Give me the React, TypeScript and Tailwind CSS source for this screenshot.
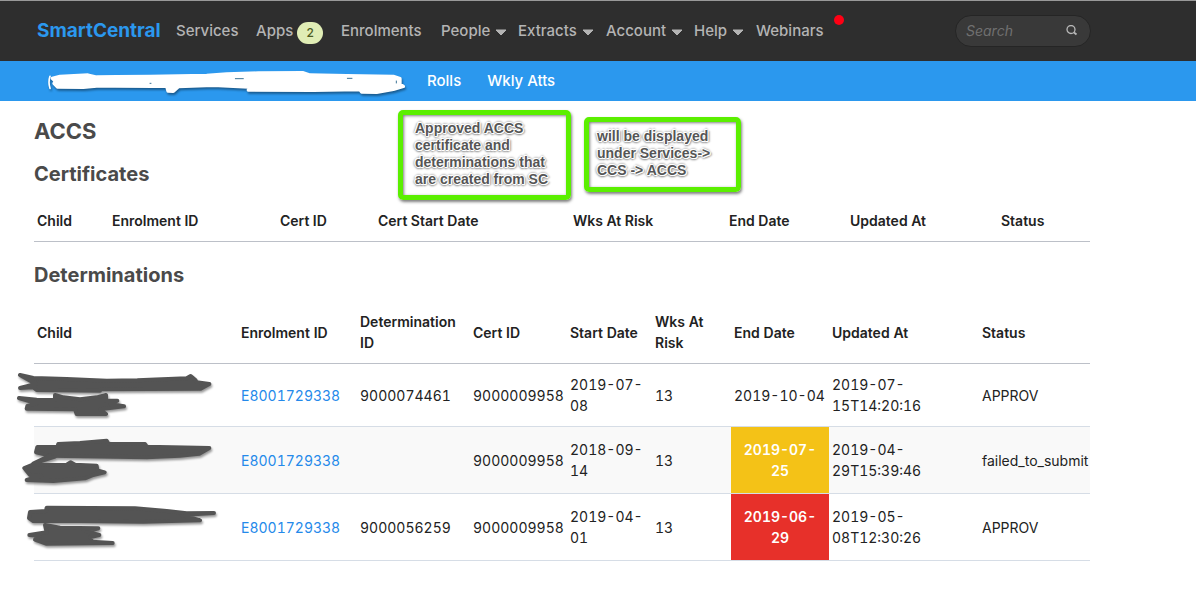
import React from 'react';

interface Determination {
  enrolmentId: string;
  determinationId: string;
  certId: string;
  startDate: string;
  weeks: number;
  endDate: string;
  endClass?: string;
  updatedAt: string;
  status: string;
  viewBox: string;
  marks: string[];
}

const certificateColumns = [
  { label: 'Child', width: 'w-[75px]' },
  { label: 'Enrolment ID', width: 'w-[168px]' },
  { label: 'Cert ID', width: 'w-[98px]' },
  { label: 'Cert Start Date', width: 'w-[195px]' },
  { label: 'Wks At Risk', width: 'w-[156px]' },
  { label: 'End Date', width: 'w-[121px]' },
  { label: 'Updated At', width: 'w-[151px]' },
  { label: 'Status', width: '' },
];

const determinationColumns = [
  { label: 'Child', width: 'w-[204px]' },
  { label: 'Enrolment ID', width: 'w-[119px]' },
  { label: 'Determination ID', width: 'w-[113px]' },
  { label: 'Cert ID', width: 'w-[97px]' },
  { label: 'Start Date', width: 'w-[85px]' },
  { label: 'Wks At Risk', width: 'w-[79px]' },
  { label: 'End Date', width: 'w-[98px]' },
  { label: 'Updated At', width: 'w-[150px]' },
  { label: 'Status', width: '' },
];

const determinations: Determination[] = [
  {
    enrolmentId: 'E8001729338',
    determinationId: '9000074461',
    certId: '9000009958',
    startDate: '2019-07-08',
    weeks: 13,
    endDate: '2019-10-04',
    updatedAt: '2019-07-15T14:20:16',
    status: 'APPROV',
    viewBox: '42 192 630 186',
    marks: [
      'M60 225 L100 234 L200 237 L320 242 L412 241 L560 235 L572 228 L586 240 L590 247 L628 252 L602 266 L300 268 L300 272 L110 270 L100 262 L60 264 L108 252 Z',
      'M57 294 L110 299 L165 300 L165 285 L190 292 L240 298 L290 292 L318 285 L318 302 L352 302 L330 312 L372 319 L300 328 L318 342 L230 342 L225 328 L80 326 L82 318 L110 310 Z',
    ],
  },
  {
    enrolmentId: 'E8001729338',
    determinationId: '',
    certId: '9000009958',
    startDate: '2018-09-14',
    weeks: 13,
    endDate: '2019-07-25',
    endClass: 'bg-[#f4c217]',
    updatedAt: '2019-04-29T15:39:46',
    status: 'failed_to_submit',
    viewBox: '42 6 630 186',
    marks: [
      'M112 66 L172 66 L175 57 L240 54 L320 47 L325 56 L435 57 L440 65 L628 69 L598 86 L540 92 L440 97 L150 92 L108 82 Z',
      'M150 92 L100 116 L165 95',
      'M73 129 L95 120 L200 119 L212 112 L225 119 L290 122 L292 136 L314 142 L280 150 L255 160 L160 168 L80 165 L125 152 L90 150 Z',
    ],
  },
  {
    enrolmentId: 'E8001729338',
    determinationId: '9000056259',
    certId: '9000009958',
    startDate: '2019-04-01',
    weeks: 13,
    endDate: '2019-06-29',
    endClass: 'bg-[#e7302a]',
    updatedAt: '2019-05-08T12:30:26',
    status: 'APPROV',
    viewBox: '42 207 630 186',
    marks: [
      'M90 261 L138 258 L140 248 L405 250 L500 258 L560 265 L642 264 L545 270 L600 286 L430 290 L240 288 L100 288 L87 279 Z',
      'M135 300 L180 308 L295 310 L260 320 L298 330 L272 336 L275 350 L338 354 L138 356 L105 344 L120 332 L88 330 L140 322 Z',
    ],
  },
];

const Caret = () => (
  <svg className="mt-1 ml-1 h-2 w-[14px]" viewBox="0 0 14 8" aria-hidden="true">
    <path d="M2 1 H12 L7 6 Z" fill="currentColor" stroke="currentColor" strokeLinejoin="round" />
  </svg>
);

const NavLink: React.FC<{ label: string; caret?: boolean; children?: React.ReactNode }> = ({
  label,
  caret,
  children,
}) => (
  <a href="#" className="relative flex items-center whitespace-nowrap">
    {label}
    {caret && <Caret />}
    {children}
  </a>
);

const Header = () => (
  <header>
    <div className="flex h-[61px] items-center border-t border-[#999] bg-[#2e2e2e] pl-[37px] pr-[105px] text-[#b4b4b4]">
      <nav className="grid grid-cols-[139px_80px_85px_100px_77px_88px_88px_62px_auto] items-center text-[15px] font-medium">
        <a href="#" className="text-[19px] font-bold text-[#2b98ee]">
          SmartCentral
        </a>
        <NavLink label="Services" />
        <NavLink label="Apps">
          <span className="mt-[3px] ml-1 flex h-[22px] w-[26px] items-center justify-center rounded-full bg-[#e0edb5] text-xs text-[#4c5b22]">
            2
          </span>
        </NavLink>
        <NavLink label="Enrolments" />
        <NavLink label="People" caret />
        <NavLink label="Extracts" caret />
        <NavLink label="Account" caret />
        <NavLink label="Help" caret />
        <NavLink label="Webinars">
          <span className="absolute -right-5 -top-[5px] h-[10px] w-[10px] rounded-full bg-[#ff0014]" />
        </NavLink>
      </nav>
      <form className="ml-auto flex h-8 w-[136px] items-center rounded-full border border-[#252525] bg-[#393939] pl-[10px] pr-3">
        <input
          type="text"
          aria-label="Search"
          placeholder="Search"
          className="min-w-0 flex-1 bg-transparent text-sm italic outline-none placeholder:text-[#707070]"
        />
        <button type="button" aria-label="Submit search">
          <svg className="h-3 w-3" viewBox="0 0 12 12" fill="none" stroke="#b8b8b8" aria-hidden="true">
            <circle cx="5" cy="4.5" r="4" strokeWidth="1.3" />
            <path d="M8 7.5 L10.5 9.5" strokeWidth="1.9" />
          </svg>
        </button>
      </form>
    </div>
    <nav className="flex h-10 items-center bg-[#2b98ee] pl-11 text-[15px] font-medium text-white">
      <svg
        className="mr-[18px] h-10 w-[365px] drop-shadow-[1px_2px_1px_rgba(0,0,0,0.4)]"
        viewBox="132 183 1095 120"
        fill="#fff"
        stroke="#fff"
        strokeLinecap="round"
        strokeLinejoin="round"
        aria-hidden="true"
      >
        <path d="M150 229 Q144 246 150 265" fill="none" strokeWidth="5" />
        <path
          strokeWidth="10"
          d="M157 235 L166 244 L162 250 L172 261 L250 262 L290 258 L345 258 L460 259 L500 258 L504 273 L520 274 L535 260 L640 256 L775 263 L745 270 L940 271 L1080 269 L1085 276 L1130 277 L1180 268 L1210 259 L1200 252 L1200 236 L1180 229 L1040 227 L930 225 L908 218 L775 219 L680 222 L620 226 L450 229 L350 230 L290 231 L264 225 L180 229 Z"
        />
        <path d="M706 236 H730 M1042 235 H1056 M1189 243 V249 M450 250 H453" stroke="#3c7395" strokeWidth="3" />
      </svg>
      <a href="#" className="mr-[26px]">
        Rolls
      </a>
      <a href="#">Wkly Atts</a>
    </nav>
  </header>
);

const TableHead: React.FC<{ columns: { label: string; width: string }[] }> = ({ columns }) => (
  <thead>
    <tr className="border-b border-[#bcc0c8]">
      {columns.map((column) => (
        <th key={column.label} scope="col" className={`px-[3px] py-[10px] font-semibold ${column.width}`}>
          {column.label}
        </th>
      ))}
    </tr>
  </thead>
);

const noteClass =
  'absolute rounded-[5px] border-[5px] border-[#5bef00] font-["Liberation_Sans",sans-serif] text-sm leading-[17px] font-bold text-[#555] shadow-[1px_2px_3px_rgba(0,0,0,0.5),inset_1px_1px_3px_rgba(0,0,0,0.5)] [text-shadow:1px_0_#fff,-1px_0_#fff,0_1px_#fff,0_-1px_#fff,1px_1px_#fff,-1px_-1px_#fff,2px_1px_2px_#888,-2px_0_2px_#aaa,0_2px_2px_#888,0_-2px_2px_#bbb]';

export default function App() {
  return (
    <div className='relative min-h-screen bg-white font-["Inter",sans-serif] text-[#222]'>
      <Header />
      <main className="ml-[34px] mr-[106px] pt-[15px]">
        <h1 className="text-[22px] leading-[30px] font-bold text-[#4a4a4a]">ACCS</h1>
        <h2 className="mt-[13px] mb-[11px] text-xl leading-[30px] font-bold text-[#4a4a4a]">Certificates</h2>
        <table className="w-full table-fixed text-left text-sm leading-[21px]">
          <TableHead columns={certificateColumns} />
        </table>

        <h2 className="mt-[18px] mb-[11px] text-xl leading-[30px] font-bold text-[#4a4a4a]">Determinations</h2>
        <table className="w-full table-fixed text-left text-sm leading-[21px] tabular-nums">
          <TableHead columns={determinationColumns} />
          <tbody>
            {determinations.map((row) => (
              <tr key={row.updatedAt} className="border-b border-[#d6dde6] even:bg-[#f9f9f9]">
                <td className="relative px-[3px] py-[10px]">
                  <svg
                    className="absolute top-0 -left-5 h-[62px] w-[210px] overflow-visible drop-shadow-[1px_2px_1px_rgba(0,0,0,0.4)]"
                    viewBox={row.viewBox}
                    fill="#545454"
                    stroke="#545454"
                    strokeWidth="12"
                    strokeLinecap="round"
                    strokeLinejoin="round"
                    aria-hidden="true"
                  >
                    {row.marks.map((d) => (
                      <path key={d} d={d} />
                    ))}
                  </svg>
                </td>
                <td className="px-[3px] py-[10px]">
                  <a href="#" className="text-[#2489ea]">
                    {row.enrolmentId}
                  </a>
                </td>
                <td className="px-[3px] py-[10px]">{row.determinationId}</td>
                <td className="px-[3px] py-[10px]">{row.certId}</td>
                <td className="px-[3px] py-[10px]">{row.startDate}</td>
                <td className="px-[3px] py-[10px]">{row.weeks}</td>
                <td
                  className={
                    row.endClass
                      ? `px-3 py-3 text-center font-semibold text-white ${row.endClass}`
                      : 'px-[3px] py-[10px]'
                  }
                >
                  {row.endDate}
                </td>
                <td className="px-[3px] py-[10px]">{row.updatedAt}</td>
                <td className="px-[3px] py-[10px]">{row.status}</td>
              </tr>
            ))}
          </tbody>
        </table>
      </main>

      <aside className={`${noteClass} top-[110px] left-[398px] h-[90px] w-[173px] px-3 py-[5px]`}>
        Approved ACCS
        <br />
        certificate and
        <br />
        determinations that
        <br />
        are created from SC
      </aside>
      <aside className={`${noteClass} top-[117px] left-[584px] h-[75px] w-[157px] px-2 py-[6px]`}>
        will be displayed
        <br />
        under Services-&gt;
        <br />
        CCS -&gt; ACCS
      </aside>
    </div>
  );
}
